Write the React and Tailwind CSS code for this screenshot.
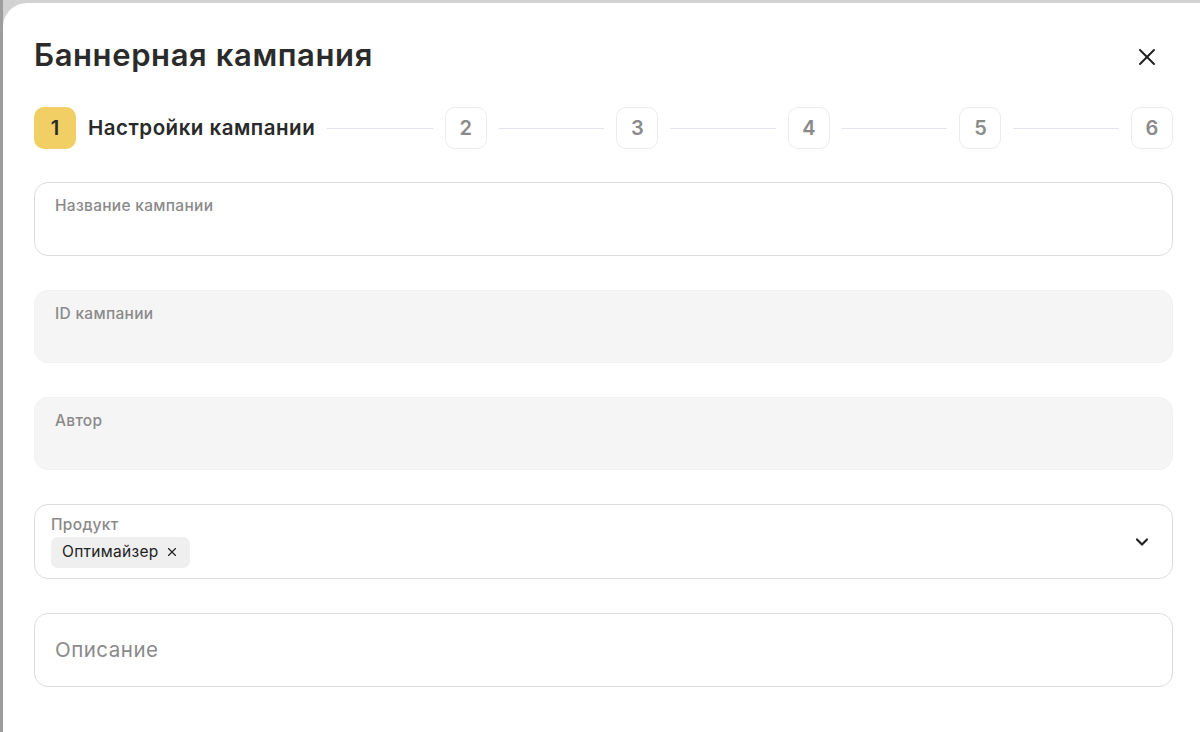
import { X, ChevronDown } from "lucide-react";

const steps = [2, 3, 4, 5, 6];

const Field = ({ label, muted, h = "h-[74px]" }) => (
  <div
    className={`${h} rounded-[14px] px-[20px] pt-[10px] ${
      muted ? "bg-[#f5f5f5] border border-[#f1f1f1]" : "bg-white border border-[#dcdcdc]"
    }`}
  >
    <span className="text-[15.5px] font-medium tracking-[0.3px] text-[#8a8a8a]">{label}</span>
  </div>
);

const App = () => {
  return (
    <div
      className="h-screen w-full overflow-hidden bg-[#9d9d9d] pl-[3px]"
      style={{ fontFamily: "Inter, 'Noto Sans', sans-serif" }}
    >
      <div className="h-full bg-[#d2d2d2] pt-[3px]">
        <div className="h-full rounded-tl-[24px] bg-white pl-[31px] pr-[27px]">
          <div className="flex items-start justify-between pt-[32px]">
            <h1 className="text-[31px] leading-[40px] font-semibold tracking-[0.6px] text-[#2b2b2b]">
              Баннерная кампания
            </h1>
            <button className="mt-[8px] mr-[12px] text-[#222]">
              <X size={28} strokeWidth={1.7} />
            </button>
          </div>

          <div className="mt-[32px] flex items-center">
            <div className="flex h-[42px] w-[42px] items-center justify-center rounded-[10px] bg-[#f1cf64] text-[20px] font-semibold text-[#2a2a2a]">
              1
            </div>
            <span className="ml-[12px] text-[20.5px] font-semibold tracking-[0.5px] text-[#2a2a2a]">
              Настройки кампании
            </span>
            {steps.map((n) => (
              <div key={n} className="flex flex-1 items-center">
                <div className="mx-[12px] h-px flex-1 bg-[#e4e4ec]" />
                <div className="flex h-[42px] w-[42px] items-center justify-center rounded-[10px] border border-[#ececec] text-[20px] font-semibold text-[#8a8a8a]">
                  {n}
                </div>
              </div>
            ))}
          </div>

          <div className="mt-[33px] flex flex-col gap-[34px]">
            <Field label="Название кампании" />
            <Field label="ID кампании" muted h="h-[73px]" />
            <Field label="Автор" muted h="h-[73px]" />

            <div className="flex h-[75px] items-center rounded-[14px] border border-[#dcdcdc] pl-[16px] pr-[20px]">
              <div className="flex flex-1 flex-col">
                <span className="text-[15.5px] font-medium leading-[18px] tracking-[0.3px] text-[#8a8a8a]">
                  Продукт
                </span>
                <div className="mt-[3px] flex">
                  <span className="flex h-[31px] items-center gap-[6px] rounded-[7px] bg-[#efefef] px-[11px] text-[15.5px] tracking-[0.3px] text-[#222]">
                    Оптимайзер
                    <X size={14} strokeWidth={2} />
                  </span>
                </div>
              </div>
              <ChevronDown size={20} strokeWidth={2.6} className="text-[#222]" />
            </div>

            <div className="flex h-[74px] items-center rounded-[14px] border border-[#dcdcdc] px-[20px]">
              <span className="text-[20.5px] tracking-[0.5px] text-[#8a8a8a]">Описание</span>
            </div>
          </div>
        </div>
      </div>
    </div>
  );
};

export default App;
